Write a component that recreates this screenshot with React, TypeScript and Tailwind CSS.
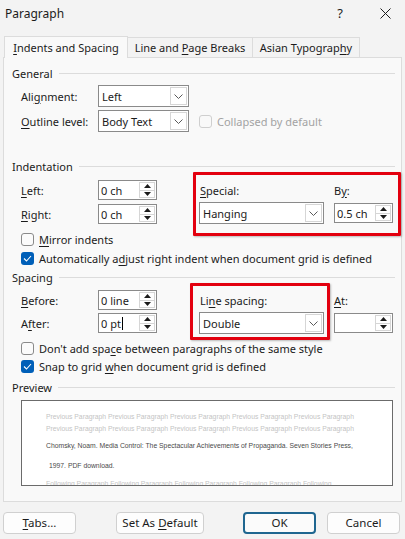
import type { ReactNode } from "react";

// Underlined access-key letter, as in Win32 dialog labels
const U = ({ children }: { children: ReactNode }) => <span className="underline underline-offset-2">{children}</span>;

const Chevron = () => (
  <svg width="9" height="5" viewBox="0 0 9 5" fill="none">
    <path d="M0.5 0.5L4.5 4.5L8.5 0.5" stroke="#5a5a5a" strokeWidth="1" />
  </svg>
);

const Select = ({ value, width, height = 22 }: { value: string; width: string; height?: number }) => (
  <div
    className={`flex bg-white border border-[#8a8a8a] ${width}`}
    style={{ height }}
  >
    <div className="flex-1 flex items-center pl-[3px]">{value}</div>
    <div className="w-[17px] m-[1px] border border-[#d6d6d6] flex items-center justify-center">
      <Chevron />
    </div>
  </div>
);

const Spinner = ({ value, caret }: { value: string; caret?: boolean }) => (
  <div className="flex h-[20px] w-[59px] bg-white border border-[#8a8a8a]">
    <div className="flex-1 flex items-center pl-[2px]">
      {value}
      {caret && <span className="inline-block w-px h-[13px] bg-black ml-[1px]" />}
    </div>
    <div className="w-[16px] m-[1px] border border-[#d6d6d6] flex flex-col">
      <div className="flex-1 flex items-center justify-center border-b border-[#d6d6d6]">
        <svg width="7" height="4" viewBox="0 0 7 4"><path d="M0 4L3.5 0L7 4Z" fill="#1b1b1b" /></svg>
      </div>
      <div className="flex-1 flex items-center justify-center">
        <svg width="7" height="4" viewBox="0 0 7 4"><path d="M0 0L3.5 4L7 0Z" fill="#1b1b1b" /></svg>
      </div>
    </div>
  </div>
);

const Check = ({ checked, disabled }: { checked?: boolean; disabled?: boolean }) =>
  checked ? (
    <div className="w-[13px] h-[13px] rounded-[3px] bg-[#005fb8] flex items-center justify-center">
      <svg width="9" height="7" viewBox="0 0 9 7" fill="none">
        <path d="M1 3.5L3.5 6L8 1" stroke="white" strokeWidth="1.1" />
      </svg>
    </div>
  ) : (
    <div
      className={`w-[13px] h-[13px] rounded-[3px] border ${
        disabled ? "border-[#cfcfcf] bg-[#f9f9f9]" : "border-[#8a8a8a] bg-[#fbfbfb]"
      }`}
    />
  );

const CheckRow = ({ checked, h = "h-[19px]", children }: { checked?: boolean; h?: string; children: ReactNode }) => (
  <div className={`flex items-center ${h} pl-[17px] gap-[5px] whitespace-nowrap`}>
    <Check checked={checked} />
    <span>{children}</span>
  </div>
);

const Section = ({ title }: { title: string }) => (
  <div className="flex items-center h-[16px] pl-[8px] pr-[6px] gap-[6px]">
    <span>{title}</span>
    <div className="flex-1 h-px bg-[#dcdcdc]" />
  </div>
);

// Red annotation frame drawn over a group of controls
const Highlight = ({ className }: { className: string }) => (
  <div
    className={`absolute pointer-events-none border-[3px] border-[#e3000f] rounded-[1px] shadow-[1px_1px_2px_rgba(0,0,0,0.25)] ${className}`}
  />
);

const Button = ({ children, width, primary }: { children: ReactNode; width: string; primary?: boolean }) => (
  <div
    className={`h-[22px] ${width} rounded-[4px] flex items-center justify-center ${
      primary ? "border-2 border-[#1f6690] bg-[#fbfbfb]" : "border border-[#d0d0d0] bg-[#fdfdfd]"
    }`}
  >
    <span>{children}</span>
  </div>
);

const prev = "Previous Paragraph Previous Paragraph Previous Paragraph Previous Paragraph Previous Paragraph";
const next = "Following Paragraph Following Paragraph Following Paragraph Following Paragraph Following";

export default function App() {
  return (
    <div className="w-[405px] h-[539px] bg-[#f3f3f3] text-[#1b1b1b] text-[11px] leading-none font-['Segoe_UI','Noto_Sans',sans-serif] overflow-hidden">
      {/* title bar */}
      <div className="h-[27px] flex items-center pl-[5px] pr-[14px] text-[12px]">
        <span className="flex-1">Paragraph</span>
        <span className="text-[13px] mr-[37px]">?</span>
        <svg width="11" height="11" viewBox="0 0 11 11" fill="none">
          <path d="M0.5 0.5L10.5 10.5M10.5 0.5L0.5 10.5" stroke="#1b1b1b" strokeWidth="1" />
        </svg>
      </div>

      {/* tab strip */}
      <div className="h-[30px] flex items-end pl-[4px]">
        <div className="relative z-10 h-[22px] -mb-px w-[124px] bg-[#f9f9f9] border border-b-0 border-[#dcdcdc] flex items-center justify-center pb-px">
          <span><U>I</U>ndents and Spacing</span>
        </div>
        <div className="h-[20px] w-[125px] border-t border-r border-[#dcdcdc] flex items-center justify-center">
          <span>Line and <U>P</U>age Breaks</span>
        </div>
        <div className="h-[20px] w-[107px] border-t border-r border-[#dcdcdc] flex items-center justify-center">
          <span>Asian Typograp<U>h</U>y</span>
        </div>
      </div>

      {/* tab page */}
      <div className="mx-[3px] h-[445px] bg-[#f9f9f9] border border-[#dcdcdc] pt-[7px]">
        <Section title="General" />
        <div className="flex items-center h-[22px] mt-[4px] pl-[17px]">
          <span className="w-[77px]">Ali<U>g</U>nment:</span>
          <Select value="Left" width="w-[91px]" />
        </div>
        <div className="flex items-center h-[22px] mt-[3px] pl-[17px]">
          <span className="w-[77px]"><U>O</U>utline level:</span>
          <Select value="Body Text" width="w-[91px]" />
          <div className="ml-[10px] flex items-center gap-[5px] text-[#a3a3a3]">
            <Check disabled />
            <span>Collapsed by default</span>
          </div>
        </div>

        <div className="mt-[26px]">
          <Section title="Indentation" />
        </div>
        <div className="flex mt-[6px] pl-[17px]">
          <div className="flex flex-col gap-[4px]">
            <div className="flex items-center h-[20px]">
              <span className="w-[77px]"><U>L</U>eft:</span>
              <Spinner value="0 ch" />
            </div>
            <div className="flex items-center h-[20px]">
              <span className="w-[77px]"><U>R</U>ight:</span>
              <Spinner value="0 ch" />
            </div>
          </div>
          <div className="relative flex ml-[42px]">
            <div className="flex flex-col w-[125px]">
              <div className="h-[20px] flex items-center pl-px"><span><U>S</U>pecial:</span></div>
              <div className="mt-[2px]"><Select value="Hanging" width="w-[125px]" /></div>
            </div>
            <div className="flex flex-col ml-[10px]">
              <div className="h-[20px] flex items-center"><span>B<U>y</U>:</span></div>
              <div className="mt-[3px]"><Spinner value="0.5 ch" /></div>
            </div>
            <Highlight className="-left-[6px] -right-[8px] -top-[8px] -bottom-[12px]" />
          </div>
        </div>

        <div className="mt-[6px]">
          <CheckRow><U>M</U>irror indents</CheckRow>
          <CheckRow checked>Automatically a<U>d</U>just right indent when document grid is defined</CheckRow>
        </div>

        <div className="mt-[1px]">
          <Section title="Spacing" />
        </div>
        <div className="flex mt-[5px] pl-[17px]">
          <div className="flex flex-col gap-[3px]">
            <div className="flex items-center h-[20px]">
              <span className="w-[77px]"><U>B</U>efore:</span>
              <Spinner value="0 line" />
            </div>
            <div className="flex items-center h-[20px]">
              <span className="w-[77px]">A<U>f</U>ter:</span>
              <Spinner value="0 pt" caret />
            </div>
          </div>
          <div className="relative flex flex-col w-[125px] ml-[42px]">
            <div className="h-[20px] flex items-center pl-px"><span>Li<U>n</U>e spacing:</span></div>
            <div className="mt-[2px]"><Select value="Double" width="w-[125px]" /></div>
            <Highlight className="-left-[9px] -right-[6px] -top-[7px] -bottom-[6px]" />
          </div>
          <div className="flex flex-col ml-[10px]">
            <div className="h-[20px] flex items-center"><span><U>A</U>t:</span></div>
            <div className="mt-[3px]"><Spinner value="" /></div>
          </div>
        </div>

        <div className="mt-[5px]">
          <CheckRow h="h-[18px]">Don't add spa<U>c</U>e between paragraphs of the same style</CheckRow>
          <CheckRow h="h-[18px]" checked>Snap to grid <U>w</U>hen document grid is defined</CheckRow>
        </div>

        <div className="mt-[4px]">
          <Section title="Preview" />
        </div>
        <div className="mt-[5px] ml-[17px] w-[372px] h-[86px] bg-white border border-[#6b6b6b] overflow-hidden pl-[24px] pt-[10px] font-['Liberation_Sans',sans-serif] text-[6.8px] leading-[12px] whitespace-nowrap">
          <div className="text-[#c4c4c4]">{prev}</div>
          <div className="text-[#c4c4c4]">{prev}</div>
          <div className="text-[#4a4a4a] mt-[5px]">Chomsky, Noam. Media Control: The Spectacular Achievements of Propaganda. Seven Stories Press,</div>
          <div className="text-[#4a4a4a] mt-[8px] pl-[3px]">1997. PDF download.</div>
          <div className="text-[#c4c4c4] mt-[6px]">{next}</div>
        </div>
      </div>

      {/* dialog buttons */}
      <div className="flex mt-[10px] pl-[3px] text-[11.5px]">
        <Button width="w-[73px]"><U>T</U>abs...</Button>
        <div className="ml-[40px]"><Button width="w-[88px]">Set As <U>D</U>efault</Button></div>
        <div className="ml-[39px]"><Button width="w-[73px]" primary>OK</Button></div>
        <div className="ml-[11px]"><Button width="w-[73px]">Cancel</Button></div>
      </div>
    </div>
  );
}
